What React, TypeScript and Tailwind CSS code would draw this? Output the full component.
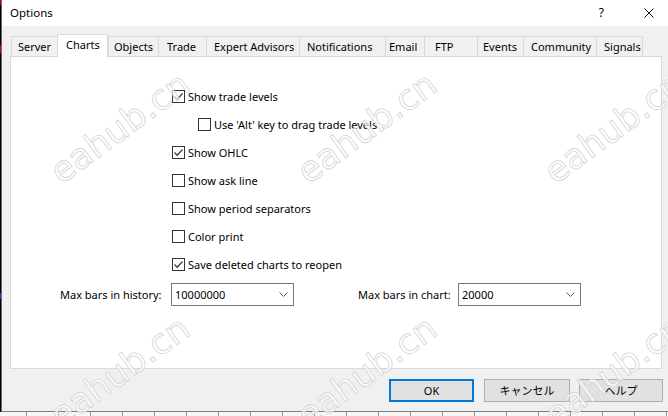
import { ReactNode } from 'react';

type Tab = { label: string; w: number; pl: number; active?: boolean };

const tabs: Tab[] = [
  { label: 'Server', w: 46, pl: 6 },
  { label: 'Charts', w: 51, pl: 8, active: true },
  { label: 'Objects', w: 50, pl: 5 },
  { label: 'Trade', w: 48, pl: 8 },
  { label: 'Expert Advisors', w: 93, pl: 7 },
  { label: 'Notifications', w: 86, pl: 7 },
  { label: 'Email', w: 39, pl: 3 },
  { label: 'FTP', w: 53, pl: 10 },
  { label: 'Events', w: 46, pl: 5 },
  { label: 'Community', w: 73, pl: 7 },
  { label: 'Signals', w: 47, pl: 7 },
];

const options = [
  { label: 'Show trade levels', checked: true },
  { label: "Use 'Alt' key to drag trade levels", checked: false, nested: true },
  { label: 'Show OHLC', checked: true },
  { label: 'Show ask line', checked: false },
  { label: 'Show period separators', checked: false },
  { label: 'Color print', checked: false },
  { label: 'Save deleted charts to reopen', checked: true },
];

// stamp positions for the diagonal site mark
const marks = [
  { x: 120, y: 128 },
  { x: 367, y: 128 },
  { x: 614, y: 128 },
  { x: 120, y: 372 },
  { x: 367, y: 372 },
  { x: 614, y: 372 },
];

function Checkbox({ checked }: { checked: boolean }) {
  return (
    <span className="w-[13px] h-[13px] border border-[#333333] bg-white flex items-center justify-center shrink-0">
      {checked && (
        <svg width="11" height="11" viewBox="0 0 11 11">
          <path d="M1.5 5.5 L4.2 8.2 L9.5 2.5" fill="none" stroke="#3c3c3c" strokeWidth="1.3" />
        </svg>
      )}
    </span>
  );
}

function Combo({ value }: { value: string }) {
  return (
    <div className="w-[123px] h-[23px] border border-[#7a7a7a] bg-white flex items-center justify-between pl-[3px] pr-[5px]">
      <span>{value}</span>
      <svg width="9" height="5" viewBox="0 0 9 5">
        <path d="M0.5 0.5 L4.5 4.5 L8.5 0.5" fill="none" stroke="#5f5f5f" strokeWidth="1" />
      </svg>
    </div>
  );
}

function Button({ children, primary }: { children: ReactNode; primary?: boolean }) {
  return (
    <div
      className={
        primary
          ? 'h-[23px] border-2 border-[#0078d7] bg-[#e1e1e1] flex items-center justify-center'
          : 'h-[23px] border border-[#adadad] bg-[#e1e1e1] flex items-center justify-center'
      }
    >
      {children}
    </div>
  );
}

export default function App() {
  return (
    <div className="relative w-[668px] h-[416px] overflow-hidden bg-white text-black text-[11px] leading-none font-['Noto_Sans','Noto_Sans_CJK_JP',sans-serif]">
      <div className="flex h-[412px]">
        {/* chart window edge behind the dialog */}
        <div className="w-px h-full bg-black flex flex-col">
          <div className="h-[5px] bg-[#c00000]" />
          <div className="h-[40px]" />
          <div className="h-[8px] bg-[#d00000]" />
          <div className="h-[240px]" />
          <div className="h-[6px] bg-[#2040c0]" />
        </div>
        <div className="w-px h-full bg-[#6b6b6b]" />

        <div className="flex-1 flex flex-col border-b border-[#7c7c7c]">
          {/* title bar */}
          <div className="h-[26px] bg-white flex items-center justify-between pl-[8px] pr-[14px]">
            <span className="text-[11.5px]">Options</span>
            <div className="flex items-center">
              <span className="mr-[40px] text-[12px]">?</span>
              <svg width="10" height="10" viewBox="0 0 10 10">
                <path d="M0.5 0.5 L9.5 9.5 M9.5 0.5 L0.5 9.5" stroke="#111" strokeWidth="1" />
              </svg>
            </div>
          </div>

          <div className="flex-1 bg-[#f0f0f0] flex flex-col pt-[8px]">
            {/* tab strip */}
            <div className="flex items-end h-[22px] ml-[9px]">
              {tabs.map((t, i) =>
                t.active ? (
                  <div
                    key={t.label}
                    className="relative z-10 -mb-px h-[23px] bg-white border-l border-r border-t border-[#d9d9d9] flex items-center pb-[3px]"
                    style={{ width: t.w, paddingLeft: t.pl }}
                  >
                    {t.label}
                  </div>
                ) : (
                  <div
                    key={t.label}
                    className={
                      i === tabs.length - 1
                        ? 'h-[20px] bg-[#f0f0f0] border-l border-r border-t border-[#d9d9d9] flex items-center pb-px'
                        : 'h-[20px] bg-[#f0f0f0] border-l border-t border-[#d9d9d9] flex items-center pb-px'
                    }
                    style={{ width: t.w, paddingLeft: t.pl }}
                  >
                    {t.label}
                  </div>
                )
              )}
            </div>

            {/* Charts page */}
            <div className="ml-[8px] w-[652px] h-[313px] bg-white border border-[#d9d9d9] pt-[25px]">
              <div className="flex flex-col pl-[161px]">
                {options.map((o) => (
                  <div
                    key={o.label}
                    className={o.nested ? 'h-[28px] flex items-center gap-[3px] pl-[26px]' : 'h-[28px] flex items-center gap-[3px]'}
                  >
                    <Checkbox checked={o.checked} />
                    <span>{o.label}</span>
                  </div>
                ))}
              </div>
              <div className="flex items-center mt-[5px] pl-[49px]">
                <span className="w-[111px]">Max bars in history:</span>
                <Combo value="10000000" />
                <span className="w-[100px] ml-[64px]">Max bars in chart:</span>
                <Combo value="20000" />
              </div>
            </div>

            {/* dialog buttons */}
            <div className="flex justify-end pr-[5px] mt-[10px]">
              <div className="w-[85px]">
                <Button primary>OK</Button>
              </div>
              <div className="w-[86px] ml-[10px]">
                <Button>キャンセル</Button>
              </div>
              <div className="w-[84px] ml-[9px]">
                <Button>ヘルプ</Button>
              </div>
            </div>
          </div>
        </div>
      </div>

      {/* time axis of the chart below */}
      <div className="h-[4px] bg-[#f6f6f6] flex pl-[26px] gap-[31px]">
        {Array.from({ length: 21 }).map((_, i) => (
          <div key={i} className="w-px h-full bg-[#9a9a9a]" />
        ))}
      </div>

      {/* site mark overlay */}
      {marks.map((m, i) => (
        <div
          key={i}
          className="absolute pointer-events-none -translate-x-1/2 -translate-y-1/2 rotate-[-36deg] text-[35px] leading-none font-['DejaVu_Sans',sans-serif] text-white/70 [-webkit-text-stroke:0.8px_#d4d4d4] whitespace-nowrap"
          style={{ left: m.x, top: m.y }}
        >
          eahub.cn
        </div>
      ))}
    </div>
  );
}
